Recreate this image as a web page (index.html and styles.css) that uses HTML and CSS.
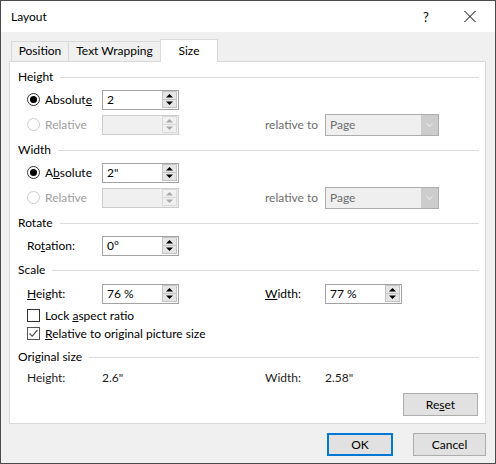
FILE: index.html
```html
<!DOCTYPE html>
<html lang="en">

<head>
    <meta charset="UTF-8">
    <meta name="viewport" content="width=device-width, initial-scale=1.0">
    <title>Layout</title>
    <link rel="stylesheet" href="styles.css">
</head>

<body>

    <div class="window">

        <div class="titlebar">
            <span class="title">Layout</span>
            <span class="cap-btn help">?</span>
            <span class="cap-btn close">
                <svg width="12" height="11" viewBox="0 0 12 11"><path d="M0.5 0 L11.5 11 M11.5 0 L0.5 11" stroke="#000" stroke-width="1" /></svg>
            </span>
        </div>

        <div class="main">

            <div class="tabs">
                <div class="tab tab-pos">Position</div>
                <div class="tab tab-wrap">Text Wrapping</div>
                <div class="tab tab-size active">Size</div>
            </div>

            <div class="panel">

                <!-- height -->
                <div class="group first">
                    <div class="group-title">Height</div>
                    <div class="row">
                        <label class="opt"><span class="radio on"></span><span>Absolut<u>e</u></span></label>
                        <div class="spin"><span>2</span><span class="arrows"></span></div>
                    </div>
                    <div class="row">
                        <label class="opt off"><span class="radio"></span><span>Relative</span></label>
                        <div class="spin off"><span></span><span class="arrows"></span></div>
                        <span class="rel-to">relative to</span>
                        <div class="select"><span>Page</span><span class="drop"></span></div>
                    </div>
                </div>

                <!-- width -->
                <div class="group">
                    <div class="group-title">Width</div>
                    <div class="row">
                        <label class="opt"><span class="radio on"></span><span>A<u>b</u>solute</span></label>
                        <div class="spin"><span>2"</span><span class="arrows"></span></div>
                    </div>
                    <div class="row">
                        <label class="opt off"><span class="radio"></span><span>Relative</span></label>
                        <div class="spin off"><span></span><span class="arrows"></span></div>
                        <span class="rel-to">relative to</span>
                        <div class="select"><span>Page</span><span class="drop"></span></div>
                    </div>
                </div>

                <!-- rotate -->
                <div class="group">
                    <div class="group-title">Rotate</div>
                    <div class="row">
                        <span class="lbl">Ro<u>t</u>ation:</span>
                        <div class="spin"><span>0°</span><span class="arrows"></span></div>
                    </div>
                </div>

                <!-- scale -->
                <div class="group scale">
                    <div class="group-title">Scale</div>
                    <div class="row scale-row">
                        <span class="lbl"><u>H</u>eight:</span>
                        <div class="spin"><span>76 %</span><span class="arrows"></span></div>
                        <span class="lbl"><u>W</u>idth:</span>
                        <div class="spin"><span>77 %</span><span class="arrows"></span></div>
                    </div>
                    <div class="check-row">
                        <span class="check"></span><span>Lock <u>a</u>spect ratio</span>
                    </div>
                    <div class="check-row">
                        <span class="check on"></span><span><u>R</u>elative to original picture size</span>
                    </div>
                </div>

                <!-- original size -->
                <div class="group orig">
                    <div class="group-title">Original size</div>
                    <div class="row info">
                        <span class="lbl">Height:</span>
                        <span>2.6"</span>
                        <span class="lbl">Width:</span>
                        <span>2.58"</span>
                    </div>
                </div>

                <div class="reset-line">
                    <button class="btn reset">Re<u>s</u>et</button>
                </div>

            </div>

            <div class="footer">
                <button class="btn ok">OK</button>
                <button class="btn cancel">Cancel</button>
            </div>

        </div>

    </div>

</body>

</html>
```

FILE: styles.css
```css
*,
*::after,
*::before {
    margin: 0;
    padding: 0;
    box-sizing: border-box;
}

body {
    background: #f0f0f0;
    font-family: "Segoe UI", Lato, "Noto Sans", sans-serif;
    font-size: 12px;
    color: #000;
}

.window {
    width: 496px;
    height: 464px;
    border: 1px solid #4a4a4a;
    background: #f0f0f0;
}

/* title bar */
.titlebar {
    height: 31px;
    background: #fff;
    display: flex;
    align-items: center;
    padding: 0 3px 0 10px;
}

.title {
    flex: 1;
    font-size: 12px;
}

.cap-btn {
    width: 44px;
    height: 31px;
    display: flex;
    justify-content: center;
    align-items: center;
}

.help {
    font-size: 13px;
}

/* tabs */
.main {
    padding-top: 7px;
}

.tabs {
    display: flex;
    align-items: flex-end;
    height: 22px;
    margin-left: 10px;
}

.tab {
    height: 20px;
    line-height: 18px;
    text-align: center;
    border: 1px solid #d9d9d9;
    border-bottom: none;
    background: #f0f0f0;
    margin-left: -1px;
}

.tab-pos {
    width: 58px;
    margin-left: 0;
}

.tab-wrap {
    width: 93px;
}

.tab-size {
    width: 58px;
}

.tab.active {
    height: 23px;
    line-height: 21px;
    background: #fff;
    margin-bottom: -1px;
    position: relative;
    z-index: 1;
}

/* panel */
.panel {
    width: 477px;
    margin-left: 8px;
    background: #fff;
    border: 1px solid #d9d9d9;
    padding: 5px 0 7px 0;
}

.group {
    margin-top: 3px;
}

.group.first {
    margin-top: 0;
}

.group.scale {
    margin-top: 2px;
}

.group.orig {
    margin-top: 5px;
}

.group-title {
    height: 20px;
    line-height: 20px;
    display: flex;
    align-items: center;
    padding: 0 6px 0 8px;
}

.group-title::after {
    content: "";
    flex: 1;
    height: 1px;
    background: #dcdcdc;
    margin-left: 7px;
}

.row {
    height: 25px;
    display: grid;
    grid-template-columns: 75px 163px 60px 114px;
    align-items: center;
    padding-left: 17px;
}

.row.scale-row {
    margin-top: 1px;
}

.row.info {
    height: 20px;
    color: #1e1e1e;
}

.opt {
    display: flex;
    align-items: center;
    gap: 5px;
}

.opt.off {
    color: #a0a0a0;
}

.radio {
    width: 13px;
    height: 13px;
    border: 1px solid #333;
    border-radius: 50%;
    display: flex;
    justify-content: center;
    align-items: center;
}

.radio.on::after {
    content: "";
    width: 7px;
    height: 7px;
    border-radius: 50%;
    background: #000;
}

.opt.off .radio {
    border-color: #cccccc;
}

/* spin box */
.spin {
    width: 77px;
    height: 20px;
    border: 1px solid #a3a3a3;
    display: flex;
    align-items: center;
    justify-content: space-between;
    padding: 0 1px 0 4px;
}

.arrows {
    width: 15px;
    height: 17px;
    background-image: url("data:image/svg+xml,%3Csvg xmlns='http://www.w3.org/2000/svg' width='15' height='17'%3E%3Crect x='0.5' y='0.5' width='14' height='16' fill='%23e5e5e5' stroke='%23c4c4c4'/%3E%3Cline x1='1' y1='8.5' x2='14' y2='8.5' stroke='%23c4c4c4'/%3E%3Cpath d='M4 6.5 L7.5 3 L11 6.5 Z' fill='%23000'/%3E%3Cpath d='M4 10.5 L11 10.5 L7.5 14 Z' fill='%23000'/%3E%3C/svg%3E");
}

.spin.off {
    background: #f0f0f0;
    border-color: #cccccc;
}

.spin.off .arrows {
    background-image: url("data:image/svg+xml,%3Csvg xmlns='http://www.w3.org/2000/svg' width='15' height='17'%3E%3Crect x='0.5' y='0.5' width='14' height='16' fill='%23f0f0f0' stroke='%23d9d9d9'/%3E%3Cline x1='1' y1='8.5' x2='14' y2='8.5' stroke='%23d9d9d9'/%3E%3Cpath d='M4 6.5 L7.5 3 L11 6.5 Z' fill='%23a8a8a8'/%3E%3Cpath d='M4 10.5 L11 10.5 L7.5 14 Z' fill='%23a8a8a8'/%3E%3C/svg%3E");
}

.rel-to {
    color: #6d6d6d;
}

.select {
    width: 114px;
    height: 22px;
    border: 1px solid #adadad;
    background: #efefef;
    color: #6d6d6d;
    display: flex;
    align-items: center;
    justify-content: space-between;
    padding-left: 4px;
}

.drop {
    width: 17px;
    height: 20px;
    background: #cccccc;
    display: flex;
    justify-content: center;
    align-items: center;
}

.drop::after {
    content: "";
    width: 5px;
    height: 5px;
    border-right: 1px solid #e6e6e6;
    border-bottom: 1px solid #e6e6e6;
    transform: rotate(45deg);
    margin-top: -3px;
}

/* checkboxes */
.check-row {
    height: 18px;
    display: flex;
    align-items: center;
    gap: 5px;
    padding-left: 17px;
}

.check {
    width: 13px;
    height: 13px;
    border: 1px solid #333;
    background: #fff;
}

.check.on {
    border-color: #555;
    background-image: url("data:image/svg+xml,%3Csvg xmlns='http://www.w3.org/2000/svg' width='11' height='11'%3E%3Cpath d='M1.5 5.5 L4.2 8.2 L9.5 2' fill='none' stroke='%23555' stroke-width='1.2'/%3E%3C/svg%3E");
}

/* buttons */
.btn {
    font-family: inherit;
    font-size: 12px;
    color: #000;
    height: 23px;
    background: #e1e1e1;
    border: 1px solid #adadad;
}

.reset-line {
    display: flex;
    justify-content: flex-end;
    margin-top: 6px;
    padding-right: 7px;
}

.reset {
    width: 75px;
}

.footer {
    display: flex;
    justify-content: flex-end;
    gap: 20px;
    margin-top: 9px;
    padding-right: 9px;
}

.ok {
    width: 66px;
    border: 2px solid #0078d7;
}

.cancel {
    width: 73px;
}
```
